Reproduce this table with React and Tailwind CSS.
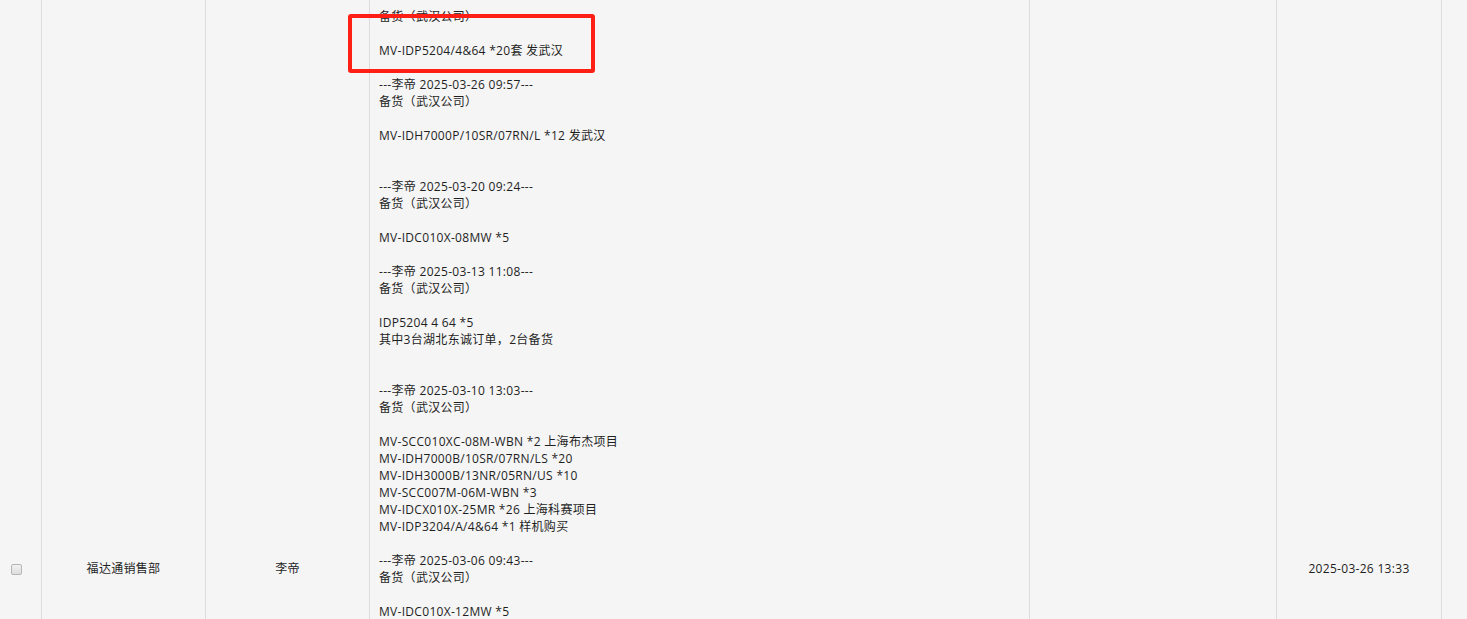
export default function App() {
  const lines = [
    "备货（武汉公司）",
    "",
    "MV-IDP5204/4&64 *20套 发武汉",
    "",
    "---李帝 2025-03-26 09:57---",
    "备货（武汉公司）",
    "",
    "MV-IDH7000P/10SR/07RN/L *12 发武汉",
    "",
    "",
    "---李帝 2025-03-20 09:24---",
    "备货（武汉公司）",
    "",
    "MV-IDC010X-08MW *5",
    "",
    "---李帝 2025-03-13 11:08---",
    "备货（武汉公司）",
    "",
    "IDP5204 4 64 *5",
    "其中3台湖北东诚订单，2台备货",
    "",
    "",
    "---李帝 2025-03-10 13:03---",
    "备货（武汉公司）",
    "",
    "MV-SCC010XC-08M-WBN *2 上海布杰项目",
    "MV-IDH7000B/10SR/07RN/LS *20",
    "MV-IDH3000B/13NR/05RN/US *10",
    "MV-SCC007M-06M-WBN *3",
    "MV-IDCX010X-25MR *26 上海科赛项目",
    "MV-IDP3204/A/4&64 *1 样机购买",
    "",
    "---李帝 2025-03-06 09:43---",
    "备货（武汉公司）",
    "",
    "MV-IDC010X-12MW *5",
    "",
    "",
    "",
  ];
  return (
    <div
      className="relative h-[619px] w-[1467px] overflow-hidden bg-[#f5f5f5] text-[12px] tracking-[0.3px] text-[#1f1f1f]"
      style={{ fontFamily: '"Open Sans", "Noto Sans CJK SC", sans-serif' }}
    >
      <div className="flex h-[1138px] w-full">
        <div className="flex w-[42px] shrink-0 items-center border-r border-[#dcdcdc] pl-[11px]">
          <div className="h-[11px] w-[11px] rounded-[2px] border border-[#b5b5b5] bg-gradient-to-b from-[#f2f2f2] to-[#dedede]" />
        </div>
        <div className="flex w-[164px] shrink-0 items-center justify-center border-r border-[#dcdcdc]">
          福达通销售部
        </div>
        <div className="flex w-[164px] shrink-0 items-center justify-center border-r border-[#dcdcdc]">
          李帝
        </div>
        <div className="w-[660px] shrink-0 border-r border-[#dcdcdc] pl-[9px] pt-[8px] leading-[17px]">
          {lines.map((l, i) => (
            <div key={i} className="h-[17px] whitespace-pre">
              {l}
            </div>
          ))}
        </div>
        <div className="w-[247px] shrink-0 border-r border-[#dcdcdc]" />
        <div className="flex w-[165px] shrink-0 items-center justify-center border-r border-[#dcdcdc]">
          2025-03-26 13:33
        </div>
        <div className="flex-1" />
      </div>
      <div className="absolute left-[348px] top-[14px] h-[59px] w-[247px] rounded-[3px] border-4 border-[#ff1f14]" />
    </div>
  );
}
